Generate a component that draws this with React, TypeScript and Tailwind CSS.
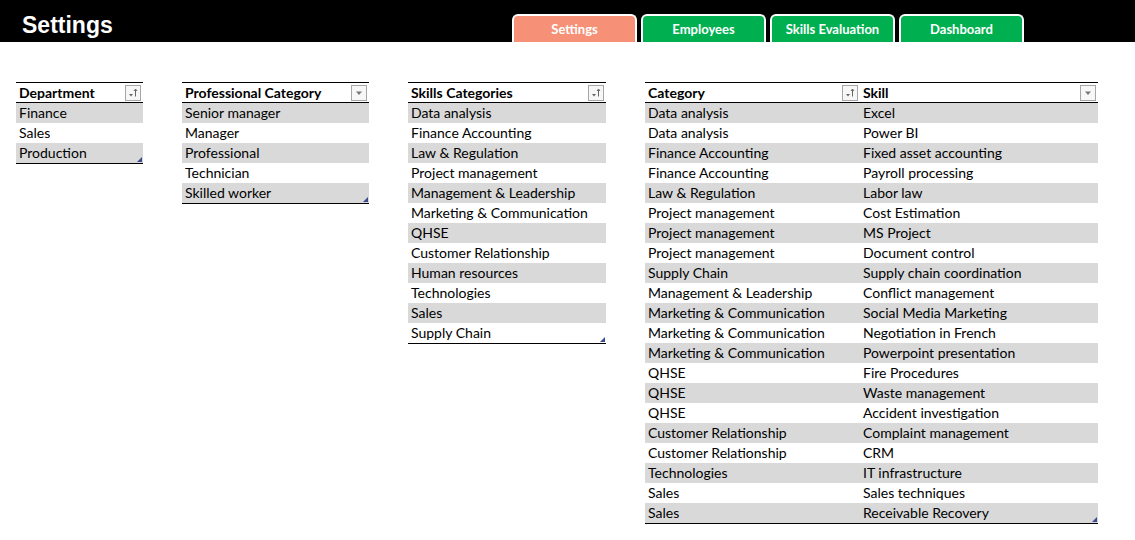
import React from 'react'

type Col = { title: string; width: string; icon: 'sort' | 'drop' }

const departments = ['Finance', 'Sales', 'Production']
const profCategories = ['Senior manager', 'Manager', 'Professional', 'Technician', 'Skilled worker']
const skillCategories = [
  'Data analysis',
  'Finance Accounting',
  'Law & Regulation',
  'Project management',
  'Management & Leadership',
  'Marketing & Communication',
  'QHSE',
  'Customer Relationship',
  'Human resources',
  'Technologies',
  'Sales',
  'Supply Chain',
]
const skills: [string, string][] = [
  ['Data analysis', 'Excel'],
  ['Data analysis', 'Power BI'],
  ['Finance Accounting', 'Fixed asset accounting'],
  ['Finance Accounting', 'Payroll processing'],
  ['Law & Regulation', 'Labor law'],
  ['Project management', 'Cost Estimation'],
  ['Project management', 'MS Project'],
  ['Project management', 'Document control'],
  ['Supply Chain', 'Supply chain coordination'],
  ['Management & Leadership', 'Conflict management'],
  ['Marketing & Communication', 'Social Media Marketing'],
  ['Marketing & Communication', 'Negotiation in French'],
  ['Marketing & Communication', 'Powerpoint presentation'],
  ['QHSE', 'Fire Procedures'],
  ['QHSE', 'Waste management'],
  ['QHSE', 'Accident investigation'],
  ['Customer Relationship', 'Complaint management'],
  ['Customer Relationship', 'CRM'],
  ['Technologies', 'IT infrastructure'],
  ['Sales', 'Sales techniques'],
  ['Sales', 'Receivable Recovery'],
]

function FilterButton({ icon }: { icon: 'sort' | 'drop' }) {
  return (
    <div className="w-[16px] h-[16px] border border-[#a6a6a6] bg-[#f7f7f7] flex items-center justify-center">
      {icon === 'sort' ? (
        <svg width="12" height="12" viewBox="0 0 12 12">
          <path d="M2 7h4l-2 2.5z" fill="#666" />
          <path d="M8.5 2.5v7" stroke="#666" strokeWidth="1" />
          <path d="M7 4l1.5-2 1.5 2" fill="none" stroke="#666" strokeWidth="1" />
        </svg>
      ) : (
        <svg width="10" height="10" viewBox="0 0 10 10">
          <path d="M2 3.5h6l-3 3.5z" fill="#777" />
        </svg>
      )}
    </div>
  )
}

function Handle() {
  return (
    <svg width="5" height="5" viewBox="0 0 5 5" className="absolute right-[1px] bottom-[1px]">
      <path d="M5 0v5H0z" fill="#3b4a8c" />
    </svg>
  )
}

function Table({ cols, rows }: { cols: Col[]; rows: string[][] }) {
  return (
    <div className="relative border-t border-b border-black">
      <div className="flex h-[20px] border-b border-black">
        {cols.map((c) => (
          <div key={c.title} className={`${c.width} flex items-center justify-between pl-[3px] pr-[2px] font-bold text-black`}>
            <span>{c.title}</span>
            <FilterButton icon={c.icon} />
          </div>
        ))}
      </div>
      {rows.map((r, i) => (
        <div key={i} className={`flex h-[20px] items-center ${i % 2 === 0 ? 'bg-[#d9d9d9]' : 'bg-white'}`}>
          {r.map((cell, j) => (
            <div key={j} className={`${cols[j].width} pl-[3px] text-black whitespace-nowrap`}>
              {cell}
            </div>
          ))}
        </div>
      ))}
      <Handle />
    </div>
  )
}

function Tab({ label, active }: { label: string; active?: boolean }) {
  return (
    <div
      className={`w-[125px] h-[28px] rounded-t-[6px] border-2 border-b-0 border-white flex items-center justify-center text-white font-bold text-[13px] ${
        active ? 'bg-[#f69177]' : 'bg-[#00b050]'
      }`}
    >
      {label}
    </div>
  )
}

export default function App() {
  return (
    <div className="w-[1135px] h-[540px] bg-white text-[14px] leading-none" style={{ fontFamily: 'Lato, "Open Sans", sans-serif' }}>
      <div className="h-[42px] bg-black flex items-end">
        <h1
          className="w-[510px] self-center pl-[22px] pt-[8px] text-white font-bold text-[23px]"
          style={{ fontFamily: '"Liberation Sans", Arial, sans-serif' }}
        >
          Settings
        </h1>
        <div className="flex gap-[4px] pl-[2px]">
          <Tab label="Settings" active />
          <Tab label="Employees" />
          <Tab label="Skills Evaluation" />
          <Tab label="Dashboard" />
        </div>
      </div>

      <div className="flex items-start gap-[39px] pl-[16px] pt-[40px]">
        <div className="w-[127px]">
          <Table cols={[{ title: 'Department', width: 'w-[127px]', icon: 'sort' }]} rows={departments.map((d) => [d])} />
        </div>
        <div className="w-[187px]">
          <Table cols={[{ title: 'Professional Category', width: 'w-[187px]', icon: 'drop' }]} rows={profCategories.map((d) => [d])} />
        </div>
        <div className="w-[198px]">
          <Table cols={[{ title: 'Skills Categories', width: 'w-[198px]', icon: 'sort' }]} rows={skillCategories.map((d) => [d])} />
        </div>
        <div className="w-[453px]">
          <Table
            cols={[
              { title: 'Category', width: 'w-[215px]', icon: 'sort' },
              { title: 'Skill', width: 'w-[238px]', icon: 'drop' },
            ]}
            rows={skills}
          />
        </div>
      </div>
    </div>
  )
}
